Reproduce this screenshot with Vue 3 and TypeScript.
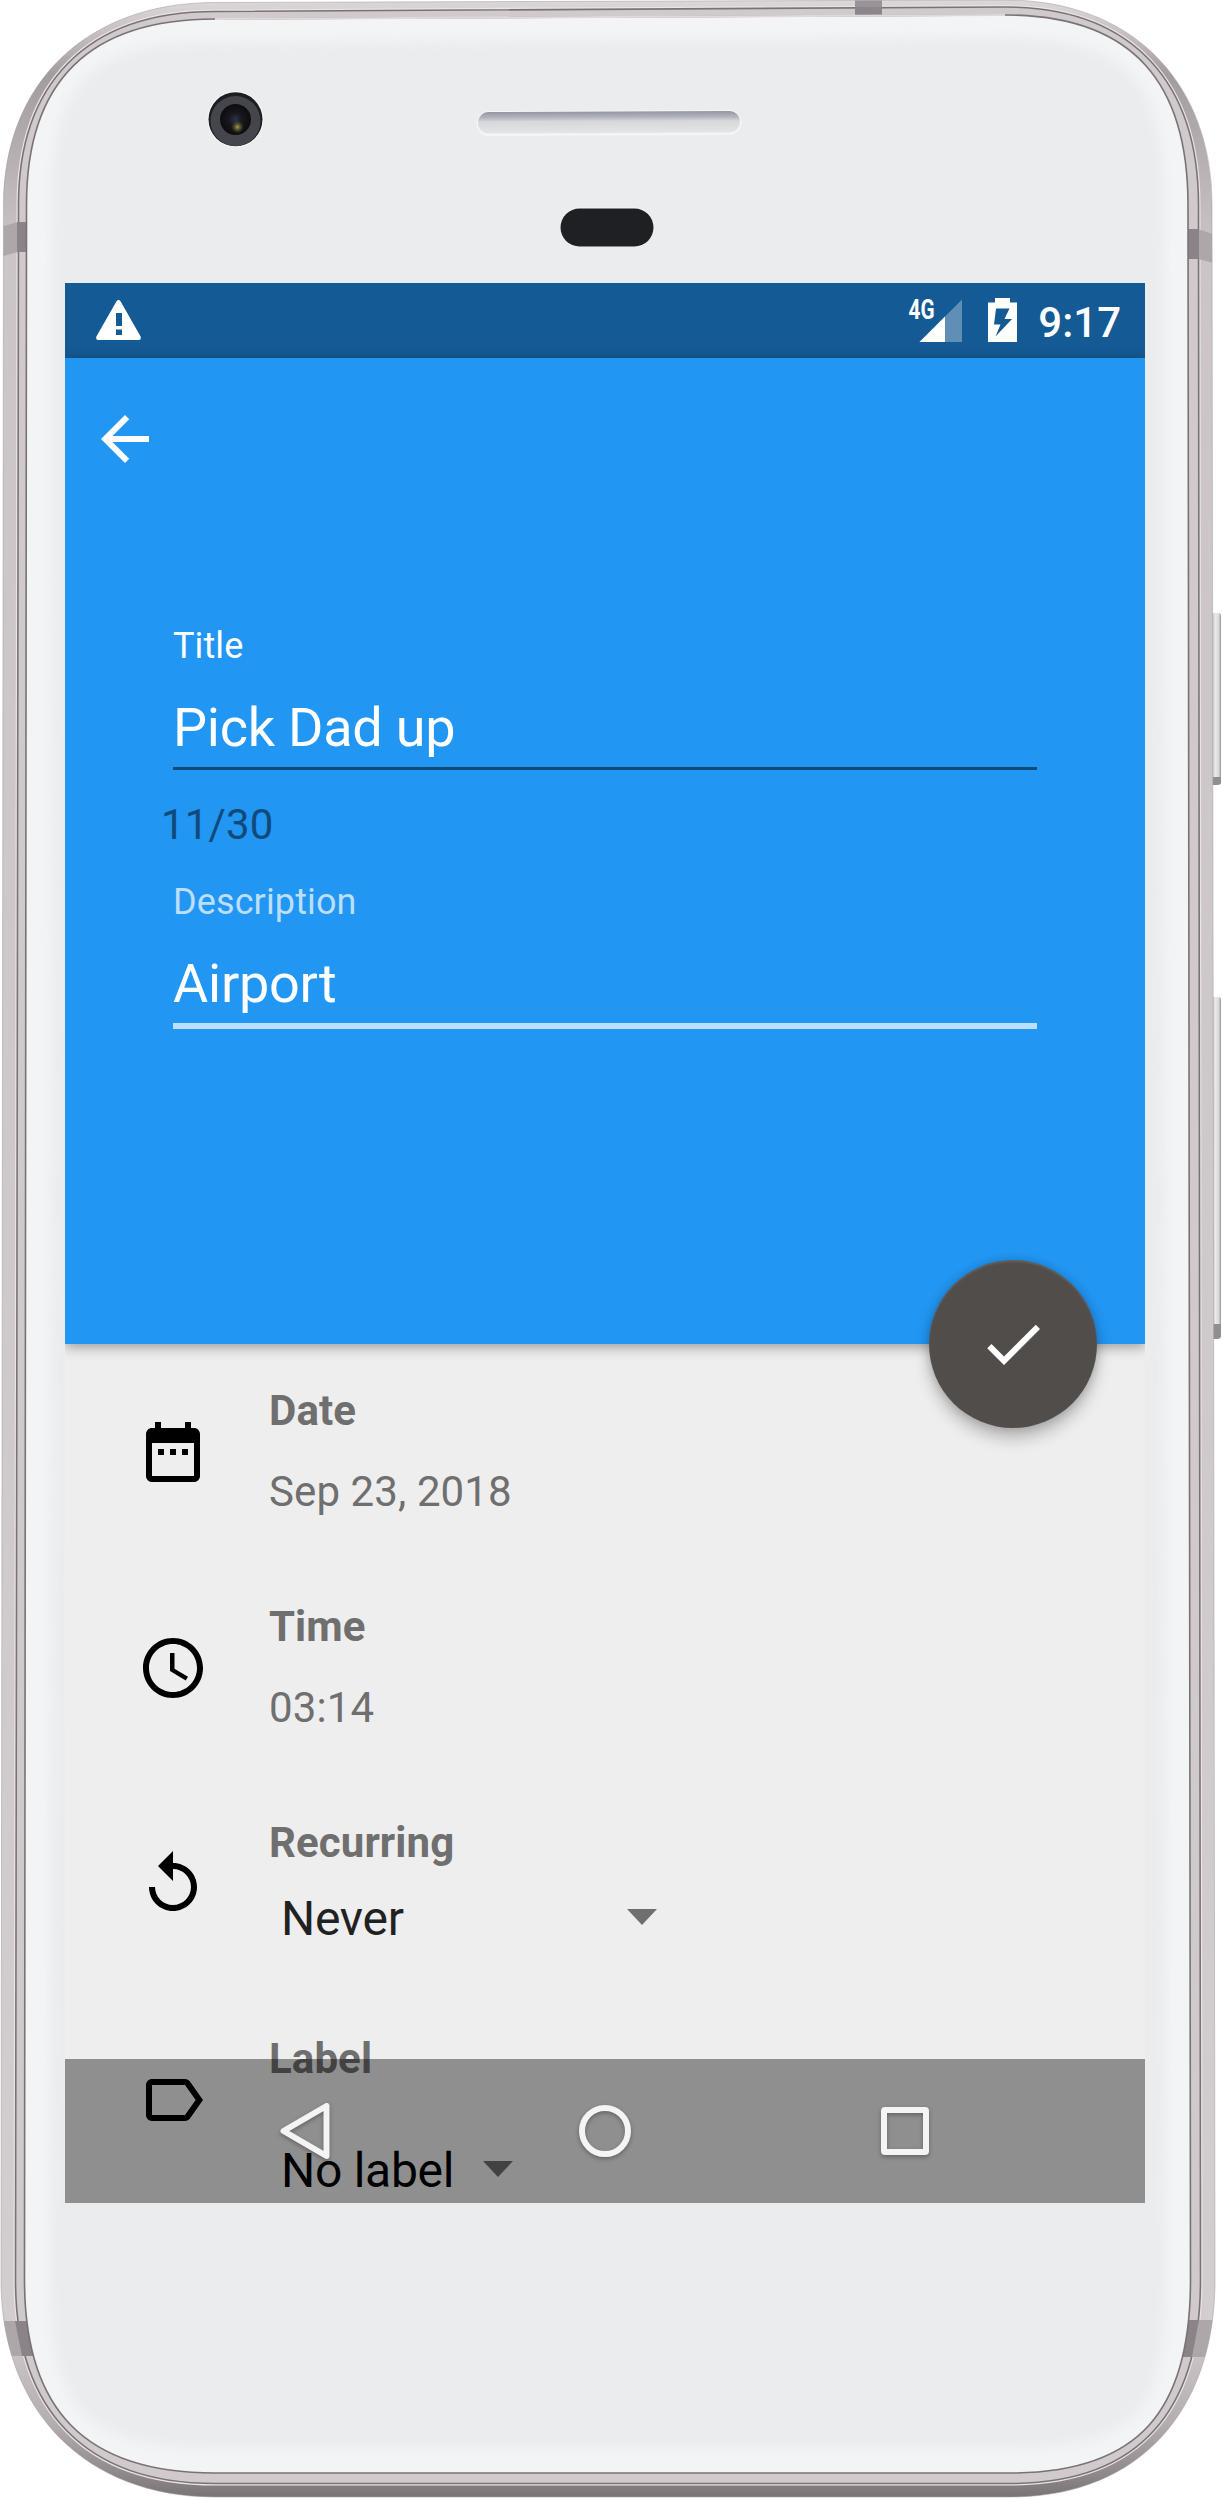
<script setup lang="ts">
interface Edges {
  left: [number, number]
  right: [number, number]
  top: [number, number]
  bottom: number
}

// Closed outline of the phone body; pairs are [upper, lower] for the sides and [left, right] for the top.
function outline({ left, right, top, bottom }: Edges): string {
  const [l1, l2] = left
  const [r1, r2] = right
  const [t1, t2] = top
  return [
    `M215 ${t1}L1005 ${t2}`,
    `C1135 ${t2} ${r1} 85 ${r1} 205`,
    `L${r2} 2280`,
    `C${r2} 2410 1140 ${bottom} 1010 ${bottom}`,
    `L215 ${bottom}`,
    `C85 ${bottom} ${l2} 2410 ${l2} 2280`,
    `L${l1} 205`,
    `C${l1} 85 85 ${t1} 215 ${t1}Z`,
  ].join('')
}

const shell = outline({ left: [3.5, 1], right: [1212, 1215], top: [2.5, 0], bottom: 2497 })
const bezel = outline({ left: [18.5, 15.5], right: [1198.5, 1200.5], top: [11.5, 7], bottom: 2483.5 })
const glass = outline({ left: [26.5, 24.5], right: [1188, 1190.5], top: [19, 15], bottom: 2473 })
const face = outline({ left: [52, 50], right: [1164, 1166], top: [42, 38], bottom: 2448 })

interface Row {
  label: string
  value: string
  kind: 'text' | 'wide' | 'tight'
  icon: string
}

const rows: Row[] = [
  {
    label: 'Date',
    value: 'Sep 23, 2018',
    kind: 'text',
    icon: 'M9 11H7v2h2v-2zm4 0h-2v2h2v-2zm4 0h-2v2h2v-2zm2-7h-1V2h-2v2H8V2H6v2H5c-1.11 0-1.99.9-1.99 2L3 20c0 1.1.89 2 2 2h14c1.1 0 2-.9 2-2V6c0-1.1-.9-2-2-2zm0 16H5V9h14v11z',
  },
  {
    label: 'Time',
    value: '03:14',
    kind: 'text',
    icon: 'M11.99 2C6.47 2 2 6.48 2 12s4.47 10 9.99 10C17.52 22 22 17.52 22 12S17.52 2 11.99 2zM12 20c-4.42 0-8-3.58-8-8s3.58-8 8-8 8 3.58 8 8-3.58 8-8 8zm.5-13H11v6l5.25 3.15.75-1.23-4.5-2.67z',
  },
  {
    label: 'Recurring',
    value: 'Never',
    kind: 'wide',
    icon: 'M12 5V1L7 6l5 5V7c3.31 0 6 2.69 6 6s-2.69 6-6 6-6-2.69-6-6H4c0 4.42 3.58 8 8 8s8-3.58 8-8-3.58-8-8-8z',
  },
  {
    label: 'Label',
    value: 'No label',
    kind: 'tight',
    icon: 'M17.63 5.84C17.27 5.33 16.67 5 16 5L5 5.01C3.9 5.01 3 5.9 3 7v10c0 1.1.9 1.99 2 1.99L16 19c.67 0 1.27-.33 1.63-.84L22 12l-4.37-6.16zM16 17H5V7h11l3.55 5L16 17z',
  },
]
</script>

<template>
  <div class="phone">
    <svg class="device" width="1222" height="2498" viewBox="0 0 1222 2498">
      <defs>
        <linearGradient id="metal" x1="0" y1="0" x2="0" y2="1">
          <stop offset="0" stop-color="#dcd7d9" />
          <stop offset=".012" stop-color="#c9c2c5" />
          <stop offset=".03" stop-color="#a39b9f" />
          <stop offset=".06" stop-color="#b5aeb1" />
          <stop offset=".1" stop-color="#cbc5c7" />
          <stop offset=".93" stop-color="#d3cdcf" />
          <stop offset=".97" stop-color="#b5adb0" />
          <stop offset=".99" stop-color="#918a8d" />
          <stop offset="1" stop-color="#7a7376" />
        </linearGradient>
        <linearGradient id="key" x1="0" y1="0" x2="1" y2="0">
          <stop offset="0" stop-color="#b9bab8" />
          <stop offset=".45" stop-color="#e9ebe9" />
          <stop offset=".8" stop-color="#d5d8d5" />
          <stop offset="1" stop-color="#8f918f" />
        </linearGradient>
        <linearGradient id="grille" x1="0" y1="0" x2="0" y2="1">
          <stop offset="0" stop-color="#9296a1" />
          <stop offset=".28" stop-color="#b4b7c0" />
          <stop offset=".45" stop-color="#d5d7da" />
          <stop offset="1" stop-color="#e3e5e6" />
        </linearGradient>
        <radialGradient id="lens">
          <stop offset="0" stop-color="#30304d" />
          <stop offset=".45" stop-color="#17171d" />
          <stop offset="1" stop-color="#0d0d10" />
        </radialGradient>
        <radialGradient id="glint">
          <stop offset="0" stop-color="#a89e50" />
          <stop offset="1" stop-color="#5c5a1c" stop-opacity="0" />
        </radialGradient>
        <filter id="soft" x="-5%" y="-5%" width="110%" height="110%">
          <feGaussianBlur stdDeviation="6" />
        </filter>
        <clipPath id="ring">
          <path :d="shell" />
        </clipPath>
      </defs>

      <rect x="1211" y="613" width="10" height="172" rx="3" fill="url(#key)" />
      <rect x="1211" y="997" width="10" height="342" rx="3" fill="url(#key)" />
      <path d="M1212 777h9v5q0 3-4 3h-5zM1212 1324h9v10q0 5-4 5h-5z" fill="#8d908e" />

      <path :d="shell" fill="url(#metal)" stroke="#a79fa3" stroke-opacity=".55" stroke-width="1" />
      <path :d="bezel" fill="#d0cacc" stroke="#e9e4e6" stroke-width="4" />
      <path :d="bezel" fill="#d0cacc" stroke="#7a7376" stroke-width="1.6" />
      <g clip-path="url(#ring)">
        <path d="M0 227L18 222V252L0 257zM1198 229L1222 237V265L1198 259zM0 2321H19L27 2356H0zM1198 2320H1222V2357H1190z" fill="#aea7aa" />
        <path d="M17 222H30V252H17zM1188 229H1199V259H1188zM15 2321H40V2356H22zM1199 2320H1180V2357H1192z" fill="#8b8387" />
        <path d="M855 0H882V16H855z" fill="#99929a" />
        <path d="M855 7H882V16H855z" fill="#8c8589" />
      </g>
      <path :d="glass" fill="#f3f4f5" stroke="#787276" stroke-width="1.6" />
      <path d="M215 19L1005 15" stroke="#dedadc" stroke-width="2" />
      <path :d="face" fill="#ebecee" filter="url(#soft)" />

      <circle cx="235.5" cy="119.3" r="28" fill="#fafafa" />
      <circle cx="235.5" cy="119.3" r="27" fill="#1d1e22" />
      <circle cx="235.5" cy="121" r="25" fill="#45464b" />
      <circle cx="235.5" cy="119.5" r="15.5" fill="url(#lens)" />
      <circle cx="237.5" cy="127" r="6.5" fill="url(#glint)" />

      <g transform="rotate(-.25 609 122)">
        <rect x="476.500" y="110.500" width="265" height="25" rx="12.500" fill="#f4f5f7" />
        <rect x="478" y="111.500" width="262" height="21.500" rx="10.750" fill="url(#grille)" />
      </g>
      <rect x="560" y="207.500" width="94" height="39.500" rx="19.750" fill="#f7f7f8" />
      <rect x="560.500" y="208.500" width="93" height="38" rx="19" fill="#1e2024" />
    </svg>

    <main class="screen">
      <div class="status">
        <svg class="warning" width="45" height="40" viewBox="0 0 45 40">
          <path d="M20.500 1.200Q22.500-1 24.500 1.200L44.600 36.500Q45.500 40 43 40H2Q-.5 40 .4 36.500zM20 13v13h6V13zM20 29.500V35h6v-5.500z" fill="#fff" fill-rule="evenodd" />
        </svg>
        <svg class="signal" width="57" height="50" viewBox="-3 -6 57 50">
          <path d="M53 1.500V44H10.500z" fill="#5f8eb6" />
          <path d="M36 18.500V44H10.500z" fill="#fff" />
          <text x="-.5" y="20.700" textLength="26" lengthAdjust="spacingAndGlyphs">4G</text>
        </svg>
        <svg class="battery" width="29" height="44" viewBox="0 0 29 44">
          <path d="M7 0H22V4.500H29V44H0V4.500H7zM8 10.500L6 26.500H12.500L7.500 38.500L24 21H16.500L21.500 10.500z" fill="#fff" fill-rule="evenodd" />
        </svg>
        <time>9:17</time>
      </div>

      <header class="hero">
        <svg class="back" width="72" height="72" viewBox="0 0 24 24">
          <path d="M20 11H7.830l5.590-5.590L12 4l-8 8 8 8 1.410-1.410L7.830 13H20v-2z" fill="#fff" />
        </svg>
        <div class="field">
          <label>Title</label>
          <div class="input">Pick Dad up</div>
        </div>
        <div class="counter">11/30</div>
        <div class="field focused">
          <label>Description</label>
          <div class="input">Airport</div>
        </div>
      </header>

      <section v-for="row in rows" :key="row.label" class="row" :class="row.kind">
        <svg width="72" height="72" viewBox="0 0 24 24"><path :d="row.icon" /></svg>
        <div class="detail">
          <strong>{{ row.label }}</strong>
          <div class="value">
            <span>{{ row.value }}</span>
            <svg v-if="row.kind !== 'text'" width="30" height="16" viewBox="0 0 30 16">
              <path d="M0 0H30L15 16z" fill="#6f6f6f" />
            </svg>
          </div>
        </div>
      </section>

      <button class="fab" aria-label="Save">
        <svg width="72" height="72" viewBox="0 0 24 24">
          <path d="M9 16.170L4.830 12l-1.420 1.410L9 19 21 7l-1.410-1.410z" fill="#fff" />
        </svg>
      </button>

      <nav class="navbar">
        <svg width="64" height="64" viewBox="0 0 64 64">
          <path d="M11.500 32L54.500 7V57z" />
        </svg>
        <svg width="64" height="64" viewBox="0 0 64 64">
          <circle cx="32" cy="32" r="23" />
        </svg>
        <svg width="64" height="64" viewBox="0 0 64 64">
          <rect x="10" y="11" width="42" height="42" rx="1" />
        </svg>
      </nav>
    </main>
  </div>
</template>

<style>
body {
  margin: 0;
  background: #fff;
}
</style>

<style scoped>
.phone {
  position: relative;
  box-sizing: border-box;
  width: 1222px;
  height: 2498px;
  padding: 283px 0 0 65px;
  overflow: hidden;
  font-family: Roboto, sans-serif;
}
.device {
  position: absolute;
  inset: 0;
}
svg {
  display: block;
  flex: none;
}
.screen {
  position: relative;
  width: 1080px;
  height: 1920px;
  overflow: hidden;
  background: #eee;
}
.status {
  display: flex;
  box-sizing: border-box;
  height: 75px;
  padding: 0 24px 0 31px;
  background: #145a94;
  color: #fff;
}
.warning {
  margin: 17px auto 0 0;
}
.signal {
  margin-top: 9px;
}
.signal text {
  fill: #fff;
  font-size: 27px;
  font-weight: 700;
}
.battery {
  margin: 15px 0 0 25px;
}
.status time {
  margin: 15px 0 0 21px;
  font-size: 42px;
  font-weight: 500;
  line-height: 50px;
}
.hero {
  position: relative;
  box-sizing: border-box;
  height: 986px;
  padding: 45px 108px 0;
  background: #2196f3;
  box-shadow: 0 3px 12px rgba(0, 0, 0, 0.36);
  color: #fff;
}
.back {
  margin: 0 0 150px -84px;
}
.field {
  border-bottom: 3px solid #114a79;
}
.field label {
  display: block;
  font-size: 36px;
  letter-spacing: 0.12px;
  line-height: 42px;
}
.input {
  padding: 29px 0 7px;
  font-size: 54px;
  letter-spacing: -0.24px;
  line-height: 64px;
}
.counter {
  margin: 30px 0 31px -12px;
  color: #114a79;
  font-size: 42px;
  letter-spacing: 0.15px;
  line-height: 50px;
}
.focused {
  border-bottom: 6px solid #bbdefb;
}
.focused label {
  color: #bbdefb;
}
.row {
  display: flex;
  align-items: center;
  height: 216px;
  padding-left: 72px;
}
.detail {
  align-self: flex-start;
  margin-left: 60px;
  padding-top: 42px;
  color: #6f6f6f;
  font-size: 42px;
  letter-spacing: 0.1px;
  line-height: 50px;
}
.detail strong {
  display: block;
  font-weight: 700;
}
.value {
  display: flex;
  align-items: center;
  margin-top: 31px;
}
.wide .value,
.tight .value {
  margin: 23px 0 0 12px;
  color: #212121;
  font-size: 48px;
  letter-spacing: -0.28px;
  line-height: 56px;
}
.tight .value {
  margin-top: 59px;
  color: #000;
}
.value svg {
  margin: -5px 0 0 auto;
}
.wide .value {
  width: 376px;
}
.tight .value {
  width: 232px;
}
.fab {
  position: absolute;
  top: 977px;
  right: 48px;
  display: flex;
  align-items: center;
  justify-content: center;
  width: 168px;
  height: 168px;
  padding: 0;
  border: 0;
  border-radius: 50%;
  background: #514d4b;
  box-shadow:
    0 10px 16px rgba(0, 0, 0, 0.24),
    0 0 10px rgba(0, 0, 0, 0.16),
    inset 0 2px 2px rgba(255, 255, 255, 0.1);
}
.navbar {
  position: absolute;
  right: 0;
  bottom: 0;
  left: 0;
  display: flex;
  align-items: center;
  justify-content: center;
  gap: 237px;
  height: 144px;
  background: rgba(0, 0, 0, 0.4);
}
.navbar svg {
  fill: none;
  stroke: #f4f4f4;
  stroke-width: 6;
  stroke-linejoin: round;
  filter: drop-shadow(0 2px 2px rgba(0, 0, 0, 0.3));
}
</style>
